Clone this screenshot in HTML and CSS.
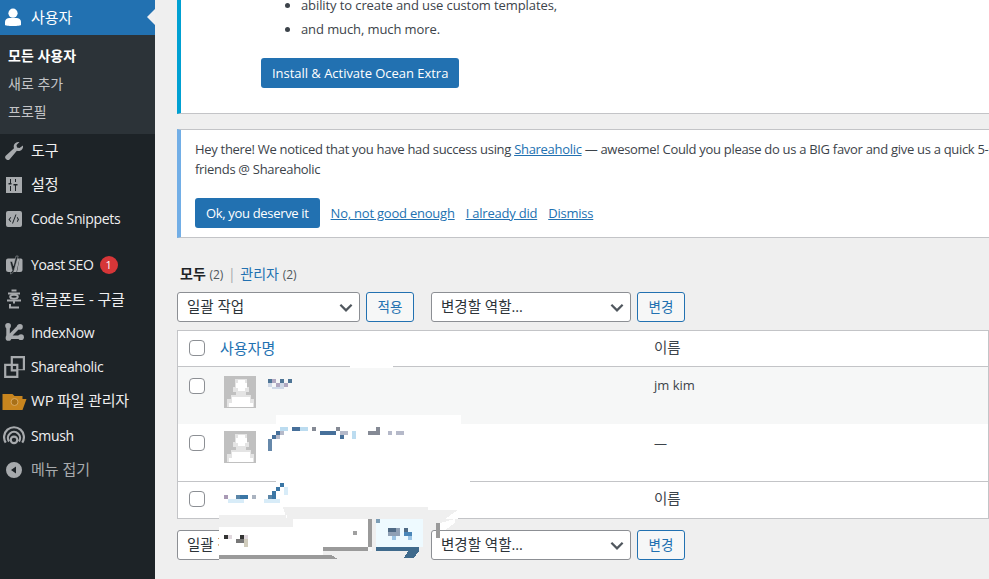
FILE: index.html
```html
<!DOCTYPE html>
<html lang="ko">
<head>
<meta charset="utf-8">
<title>사용자</title>
<link rel="stylesheet" href="styles.css">
</head>
<body>
<div class="page">
<nav class="side">
  <div class="cur"><svg class="ic" viewBox="0 0 20 20"><circle cx="10" cy="6.2" r="4.6"/><path d="M2 18v-3.200c0-2.400 2.200-3.800 4.400-3.800h7.200c2.200 0 4.400 1.400 4.400 3.800V18c-1 .6-3 1-8 1s-7-.4-8-1z"/></svg><span>사용자</span></div>
  <div class="sub">
    <a class="on">모든 사용자</a>
    <a>새로 추가</a>
    <a>프로필</a>
  </div>
  <div class="item up"><svg class="ic" viewBox="0 0 20 20"><path d="M19 4.500c.5 2.500-1 5-3.500 5.500-1 .2-1.800.1-2.600-.2L5.500 18.500c-.8.800-2 .8-3 0l-.8-.8c-.8-.9-.8-2.100 0-2.900L10 7.200c-.3-.8-.4-1.700-.2-2.600C10.400 2 13 .6 15.500 1.100l-3 3 .5 2.500 2.500.5z"/></svg><span>도구</span></div>
  <div class="item up"><svg class="ic" viewBox="0 0 20 20"><path fill-rule="evenodd" d="M2 2h16v16H2zM6 4v4H4.500v1.500h3V8H7V4zM6 11v5h1v-5zM11 4v3h1V4zM9.500 9v1.500H11V16h1v-5.500h1.500V9z"/></svg><span>설정</span></div>
  <div class="item"><svg class="ic" viewBox="0 0 20 20"><path fill-rule="evenodd" d="M4 2h12a2 2 0 0 1 2 2v12a2 2 0 0 1-2 2H4a2 2 0 0 1-2-2V4a2 2 0 0 1 2-2zM11.500 5.500l-3.500 9h1l3.500-9zM6.500 8 4.500 10.500l2 2.500.7-.6-1.500-1.900 1.500-1.900zM13.500 8l-.7.6 1 1.900-1 1.900.7.600 1.500-2.500z"/></svg><span class="en">Code Snippets</span></div>
  <div class="item i-yoast"><svg class="ic" viewBox="0 0 20 20"><path d="M4 3.500h11.500L12.500 17H4.500A2.500 2.500 0 0 1 2 14.500V5.500a2 2 0 0 1 2-2z"/><path d="M15.500 3.500H17a1.500 1.500 0 0 1 1.500 1.500v9.500A2.500 2.500 0 0 1 16 17h-3z"/><path class="yo" d="M6 6.500h2.200l1.300 4.300L12 1h2.200L10 15.500c-.5 1.800-1.500 3-3.500 3.500v-1.800c1-.3 1.500-.8 1.800-1.700L6 6.500z"/></svg><span class="en">Yoast SEO</span><b class="badge">1</b></div>
  <div class="item"><svg class="ic line" viewBox="0 0 20 20"><path d="M7.500 1.500h5M4 4.500h12M3 11.500h14M10 11.500v3M6 15v3.500h9"/><ellipse cx="10" cy="7.800" rx="3.800" ry="2"/></svg><span class="tight">한글폰트 - 구글</span></div>
  <div class="item"><svg class="ic big" viewBox="0 0 20 20"><path d="M3 3h3.200v7.400L13.500 3l2.200 2.200-7 7h8.800v3.200H5a2 2 0 0 1-2-2z"/><circle cx="4.600" cy="3.400" r="2.600"/><circle cx="15.400" cy="4.400" r="2.600"/><circle cx="16.400" cy="13.800" r="2.600"/><circle cx="5" cy="14.500" r="2.600"/></svg><span class="en">IndexNow</span></div>
  <div class="item"><svg class="ic big" viewBox="0 0 20 20"><path fill-rule="evenodd" d="M7 0h13v13h-6v7H1V7h6zM9 2v5h5v5h4V2zM3 9v9h9v-4H7V9zM9 9v3h3V9z"/></svg><span class="en">Shareaholic</span></div>
  <div class="item i-wp up"><svg class="folder" viewBox="0 0 24 18"><path fill="#c8851e" d="M0 2h10l2 2h8v3h4l-4 11H0z"/><circle cx="12" cy="10" r="3.500" fill="#a87018" stroke="#d8a860"/></svg><span class="tight">WP 파일 관리자</span></div>
  <div class="item i-smush"><svg class="ic big" viewBox="0 0 20 20"><path fill="none" stroke="currentColor" stroke-width="2" d="M2.500 16A9 9 0 1 1 17.500 16M5.500 15A5.500 5.500 0 1 1 14.500 15"/><circle cx="10" cy="13.500" r="3" fill="none" stroke="currentColor" stroke-width="2"/></svg><span class="en">Smush</span></div>
  <div class="collapse up"><svg class="ic" viewBox="0 0 20 20"><path fill-rule="evenodd" d="M10 2a8 8 0 1 1 0 16 8 8 0 0 1 0-16zM12 6.500 7 10l5 3.500z"/></svg><span>메뉴 접기</span></div>
</nav>
<main class="main">
  <section class="notice ocean">
    <ul class="feats">
      <li>ability to create and use custom templates,</li>
      <li>and much, much more.</li>
    </ul>
    <a class="btn">Install &amp; Activate Ocean Extra</a>
  </section>
  <section class="notice share">
    <p class="msg">Hey there! We noticed that you have had success using <a>Shareaholic</a> — awesome! Could you please do us a BIG favor and give us a quick 5-star<br>friends @ Shareaholic</p>
    <div class="acts">
      <a class="btn">Ok, you deserve it</a>
      <a>No, not good enough</a>
      <a>I already did</a>
      <a>Dismiss</a>
    </div>
  </section>
  <div class="views"><b>모두</b> <i>(2)</i> <s>|</s> <a>관리자</a> <i>(2)</i></div>
  <div class="bar">
    <div class="sel w-bulk"><span>일괄 작업</span><svg viewBox="0 0 12 8"><path d="M1 1.500 6 6.500 11 1.500"/></svg></div>
    <a class="ghost">적용</a>
    <div class="sel w-role"><span>변경할 역할...</span><svg viewBox="0 0 12 8"><path d="M1 1.500 6 6.500 11 1.500"/></svg></div>
    <a class="ghost">변경</a>
  </div>
  <div class="table">
    <div class="row head"><u class="cb"></u><a class="name">사용자명</a><span class="col">이름</span></div>
    <div class="row r1"><u class="cb"></u><span class="ava"><svg viewBox="0 0 32 32" shape-rendering="crispEdges"><path fill="#e4e4e4" d="M11 3h12v8h2v5h-3v3h5v4h3v8H3v-8h4v-4h5v-3H9v-5h2z"/><path fill="#fff" d="M14 4h7v11h-7zM12 7h11v5H12zM8 21h18v10H8zM5 27h24v4H5z"/></svg></span><span class="col">jm kim</span></div>
    <div class="row r2"><u class="cb"></u><span class="ava"><svg viewBox="0 0 32 32" shape-rendering="crispEdges"><path fill="#e4e4e4" d="M11 3h12v8h2v5h-3v3h5v4h3v8H3v-8h4v-4h5v-3H9v-5h2z"/><path fill="#fff" d="M14 4h7v11h-7zM12 7h11v5H12zM8 21h18v10H8zM5 27h24v4H5z"/></svg></span><span class="col dash">—</span></div>
    <div class="row foot"><u class="cb"></u><span class="col">이름</span></div>
  </div>
  <div class="bar lower">
    <div class="sel w-bulk"><span>일괄 작업</span><svg viewBox="0 0 12 8"><path d="M1 1.500 6 6.500 11 1.500"/></svg></div>
    <a class="ghost">적용</a>
    <div class="sel w-role"><span>변경할 역할...</span><svg viewBox="0 0 12 8"><path d="M1 1.500 6 6.500 11 1.500"/></svg></div>
    <a class="ghost">변경</a>
  </div>
</main>
<svg class="overlay" viewBox="0 0 989 579" shape-rendering="crispEdges">
  <path fill="#fff" d="M350 364h43v4h-43zM276 415h185v9H276zM276 424h185v30H276zM276 478h194v29H276zM283 507h175v12H283zM219 505h64v10h-64z"/>
  <path fill="#efefef" d="M283 507h145v3h30l-13 9H287v-4h-68v4h68z"/>
  <path fill="#efefef" d="M219 519h157v8H219zM323 551h100v10H323zM219 559h110v2H219z"/>
  <path fill="#fff" d="M219 527h74v-8h75v28h-45v8H219z"/>
  <path fill="#9a9a9a" d="M323 547h45v4h-45zM219 555h112l7 4H219zM368 519h4v28h-4zM436 523h4v15h-4z"/>
  <path fill="#efefef" d="M372 519h4v32h-4z"/>
  <path fill="#eefaff" d="M376 519h47v28h-47z"/>
  <path fill="#fff" d="M440 523l15-4v4l-10 7h-5z"/>
  <path fill="#3f6a8c" d="M376 547h43v4l-5 7h-10l4-7h-32z"/>
  <path fill="#7c9db5" d="M376 519h4v4h-4z"/>
  <path fill="#4f6a85" d="M388 528h8v4h-8zM404 528h4v4h-4z"/>
  <path fill="#8fa0b5" d="M396 528h4v8h-4zM388 532h8v4h-8z"/>
  <path fill="#4a86b8" d="M404 532h8v4h-8z"/>
  <path fill="#9cc4e4" d="M408 536h4v4h-4zM392 536h4v4h-4z"/>
  <path fill="#a0a0a0" d="M353 531h4v4h-4z"/>
  <path fill="#333" d="M224 535h4v4h-4zM240 535h4v4h-4z"/>
  <path fill="#e0d8dd" d="M228 535h4v4h-4zM244 535h4v4h-4z"/>
  <path fill="#777" d="M236 539h8v4h-8z"/>
  <path fill="#d0ccbc" d="M244 539h4v8h-4z"/>
  <path fill="#4f7596" d="M268 379h4v4h-4zM280 379h4v4h-4zM288 379h4v4h-4z"/>
  <path fill="#b0a8c0" d="M272 379h4v4h-4zM276 383h4v4h-4zM284 383h4v4h-4z"/>
  <path fill="#cfd8e6" d="M268 383h4v4h-4zM280 383h4v4h-4zM272 387h12v2h-12z"/>
  <path fill="#47709a" d="M292 427h8v4h-8zM320 431h16v4h-16zM340 435h4v4h-4zM276 431h4v4h-4zM272 435h4v4h-4z"/>
  <path fill="#bcdcf0" d="M300 427h8v4h-8zM352 431h4v4h-4zM352 435h4v4h-4zM280 427h8v4h-8z"/>
  <path fill="#858a95" d="M312 427h4v4h-4zM336 427h4v4h-4zM368 431h8v4h-8zM376 427h4v8h-4z"/>
  <path fill="#b5b9c9" d="M340 431h8v4h-8zM388 431h4v4h-4zM396 431h8v4h-8zM276 435h4v4h-4zM280 431h4v4h-4z"/>
  <path fill="#6688aa" d="M268 443h4v8h-4zM268 439h4v4h-4z"/>
  <path fill="#a99ab5" d="M224 495h4v4h-4z"/>
  <path fill="#5b86a8" d="M236 495h4v4h-4zM268 495h4v4h-4z"/>
  <path fill="#3a76a5" d="M240 495h8v4h-8zM272 491h4v8h-4zM276 487h4v4h-4zM280 483h4v4h-4z"/>
  <path fill="#aab3c0" d="M252 495h4v4h-4z"/>
  <path fill="#d8ecf8" d="M228 499h16v4h-16zM264 499h16v4h-16zM284 487h4v8h-4z"/>
</svg>
</div>
</body>
</html>
```
FILE: styles.css
```css
* { box-sizing: border-box; }
html, body { margin: 0; height: 100%; overflow: hidden; }
body { background: #efefef; color: #3c434a; font: 13px/20px "Open Sans", "Noto Sans CJK KR", sans-serif; }
.page { position: relative; display: flex; width: 989px; height: 579px; overflow: hidden; }
a { color: #2271b1; }
.overlay { position: absolute; left: 0; top: 0; width: 989px; height: 579px; pointer-events: none; }
.side { flex: 0 0 155px; background: #1d2327; color: #f0f0f1; font-size: 15px; }
.side .en { font-size: 14px; letter-spacing: -.35px; }
.side .tight { letter-spacing: -.2px; }
.ic { width: 20px; height: 20px; fill: #a7aaad; color: #a7aaad; flex: none; }
.ic.big { width: 22px; height: 22px; margin-left: -1px; margin-right: -1px; }
.ic.line { fill: none; stroke: #a7aaad; stroke-width: 2; }
.cur, .item, .collapse { display: flex; align-items: center; gap: 7px; padding-left: 4px; }
.up span { position: relative; top: -1px; }
.cur { position: relative; height: 35px; background: #2271b1; color: #fff; padding: 0 0 2px 3px; gap: 8px; }
.cur .ic { fill: #fff; }
.cur::after { content: ""; position: absolute; right: 0; top: 9px; border: 8px solid transparent; border-right-color: #f0f0f1; border-left: 0; }
.sub { height: 99px; background: #2c3338; padding-top: 7px; display: flex; flex-direction: column; }
.sub a { height: 28px; line-height: 28px; padding-left: 8px; color: #c3c4c7; font-size: 14px; }
.sub a.on { color: #fff; font-weight: 700; }
.item { height: 34px; padding-bottom: 1px; }
.i-yoast { margin-top: 12px; }
.i-wp { gap: 4px; padding-left: 2px; }
.i-smush { margin-top: 1px; }
.folder { width: 25px; height: 18px; flex: none; }
.yo { fill: #1d2327; stroke: #a7aaad; stroke-width: .5; }
.badge { margin-left: -1px; width: 18px; height: 18px; line-height: 18px; border-radius: 50%; background: #d63638; color: #fff; text-align: center; font-size: 11px; font-weight: 400; }
.collapse { height: 34px; color: #a7aaad; }
.main { flex: 0 0 834px; padding-left: 22px; }
.notice { width: 900px; background: #fff; border: 0 solid #c3c4c7; border-bottom-width: 1px; }
.ocean { display: flow-root; height: 114px; border-left: 4px solid #00a0d2; padding-left: 80px; letter-spacing: -.1px; }
.feats { margin: -7px 0 17px; padding: 0 0 0 40px; line-height: 24px; }
.feats li { height: 24px; }
.btn { display: inline-block; height: 30px; line-height: 30px; padding: 0 11px; background: #2271b1; color: #fff; border-radius: 3px; }
.ocean .btn { letter-spacing: -.03px; }
.share { height: 109px; margin-top: 15px; border-top-width: 1px; border-left: 4px solid #72aee6; padding: 9px 0 0 14px; letter-spacing: -.3px; }
.msg { margin: 0; width: 880px; white-space: nowrap; }
.msg a, .acts a:not(.btn) { text-decoration: underline; }
.acts { display: flex; align-items: center; gap: 11px; margin-top: 19px; letter-spacing: -.22px; }
.acts .btn { letter-spacing: -.33px; }
.views { margin-top: 26px; height: 20px; font-size: 14px; padding-left: 3px; line-height: 20px; }
.views b { color: #1d2327; }
.views i { font-style: normal; color: #50575e; font-size: 12px; }
.views s { text-decoration: none; color: #a7aaad; margin: 0 1px; }
.bar { display: flex; align-items: center; height: 30px; margin-top: 8px; }
.sel { display: flex; align-items: center; justify-content: space-between; height: 30px; padding: 0 6px 0 9px; background: #fff; border: 1px solid #8c8f94; border-radius: 3px; font-size: 14.5px; color: #2c3338; }
.sel svg { width: 14px; height: 9px; fill: none; stroke: #50575e; stroke-width: 2; }
.w-bulk { width: 183px; }
.w-role { width: 200px; margin-left: 17px; }
.ghost { height: 30px; line-height: 28px; width: 48px; margin-left: 6px; text-align: center; background: #f6f7f7; border: 1px solid #2271b1; border-radius: 3px; font-size: 13.5px; }
.table { width: 812px; height: 189px; margin-top: 8px; background: #fff; border: 1px solid #c3c4c7; }
.row { position: relative; display: flex; align-items: flex-start; padding-left: 11px; }
.head { height: 36px; border-bottom: 1px solid #c3c4c7; padding-top: 9px; }
.r1 { height: 57px; background: #f6f7f7; padding-top: 11px; }
.r2 { height: 58px; border-bottom: 1px solid #c3c4c7; padding-top: 11px; }
.foot { height: 36px; padding-top: 9px; }
.cb { display: block; width: 16px; height: 16px; flex: none; background: #fff; border: 1px solid #8c8f94; border-radius: 4px; }
.name { margin-left: 15px; margin-top: -2px; font-size: 15px; }
.col { position: absolute; left: 476px; top: 7px; font-size: 14.500px; }
.r1 .col { top: 8px; font-size: 13px; }
.r2 .col { top: 9px; font-size: 13px; }
.ava { display: block; width: 32px; height: 32px; margin: -2px 0 0 19px; background: #c0c0c0; }
.r2 .ava { margin-top: -4px; }
.ava svg { display: block; width: 32px; height: 32px; }
.lower { margin-top: 11px; }
```
